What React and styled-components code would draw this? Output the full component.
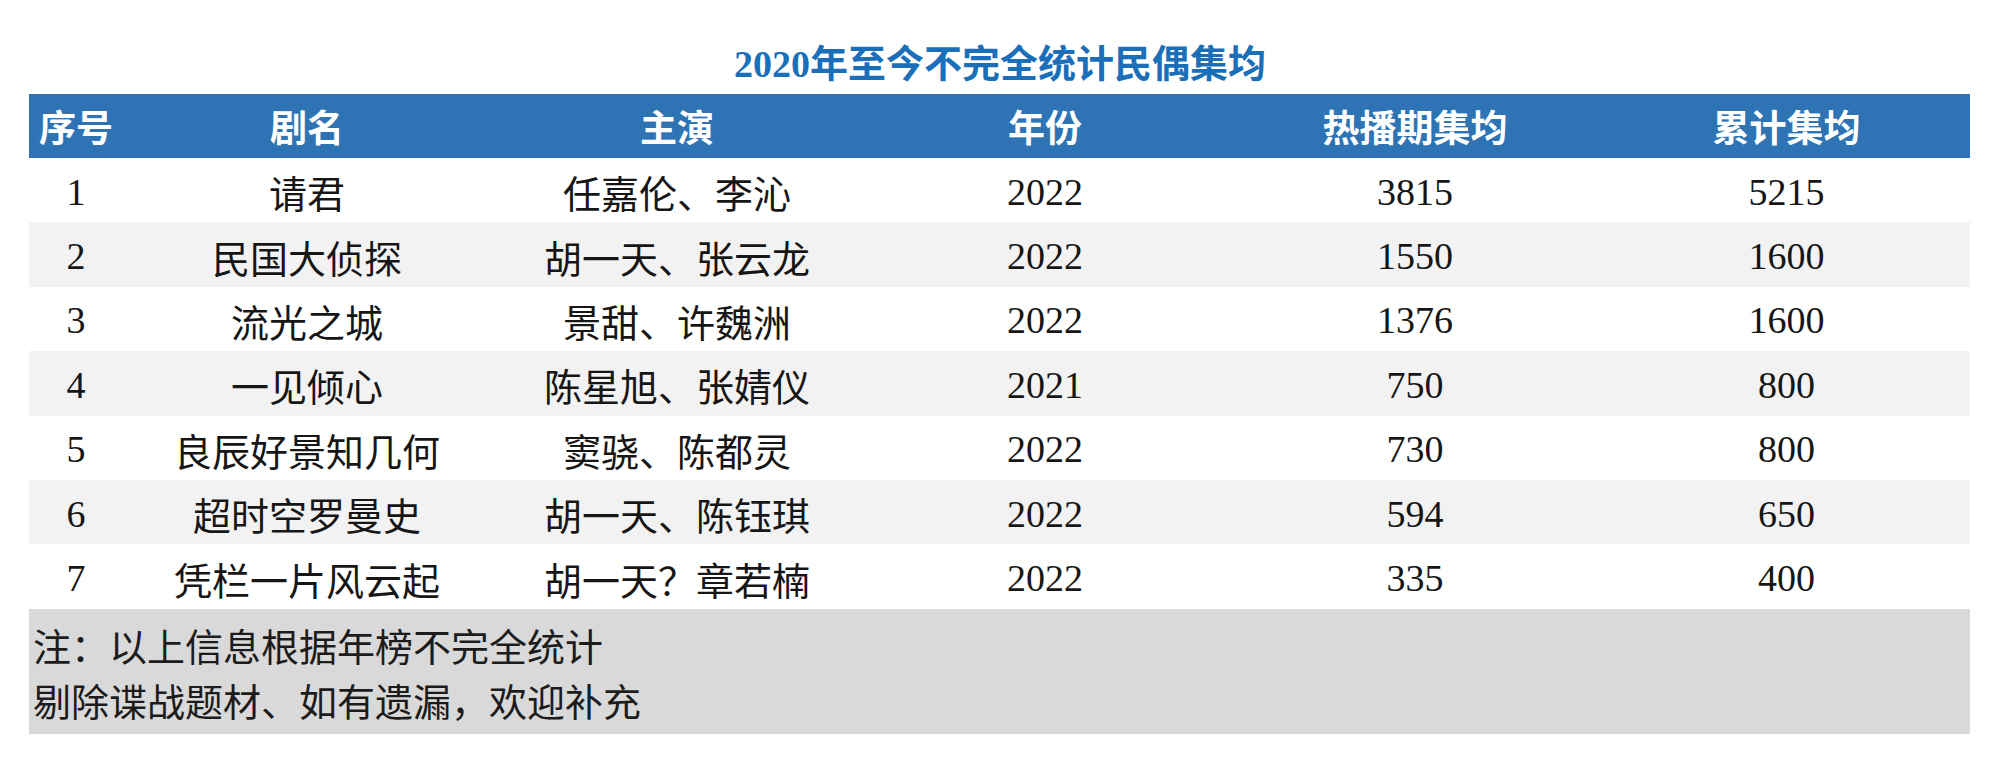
import styled, { createGlobalStyle } from "styled-components";

const GlobalStyle = createGlobalStyle`
    html, body {
        margin: 0;
        padding: 0;
        background: #ffffff;
    }
    body {
        font-family: "Noto Sans CJK SC", "Noto Sans", sans-serif;
    }
`

const Page = styled.div`
    width: 2000px;
    height: 765px;
    background: #ffffff;
    overflow: hidden;
`

const Title = styled.h1`
    margin: 0;
    height: 94px;
    padding-top: 45px;
    box-sizing: border-box;
    text-align: center;
    font-family: "Liberation Serif", "Noto Sans CJK SC", serif;
    font-size: 38px;
    line-height: 38px;
    font-weight: 700;
    color: #1b6fb9;
`

const Table = styled.div`
    margin-left: 29px;
    width: 1941px;
`

const Row = styled.div`
    display: grid;
    grid-template-columns: 94px 368px 372px 364px 376px 367px;
    height: ${props => props.header ? "64px" : "64.4px"};
    background: ${props => props.header ? "#2e74b5" : props.striped ? "#f2f2f2" : "#ffffff"};
`

const HeadCell = styled.div`
    display: flex;
    align-items: center;
    justify-content: center;
    font-family: "Noto Sans CJK SC", sans-serif;
    font-size: 37px;
    font-weight: 700;
    color: #ffffff;
    white-space: nowrap;
`

const Cell = styled.div`
    display: flex;
    align-items: center;
    justify-content: center;
    padding-top: 3px;
    font-family: "Liberation Serif", "Noto Sans CJK SC", serif;
    font-size: 38px;
    color: #161616;
    white-space: nowrap;
`

const Note = styled.div`
    margin-top: 0.2px;
    padding: 8px 0 7px 4px;
    background: #d9d9d9;
    font-family: "Noto Sans CJK SC", sans-serif;
    font-size: 38px;
    line-height: 55px;
    color: #1c1c1c;
`

const headers = ["序号", "剧名", "主演", "年份", "热播期集均", "累计集均"]

const dramas = [
    { no: 1, name: "请君", cast: "任嘉伦、李沁", year: 2022, hot: 3815, total: 5215 },
    { no: 2, name: "民国大侦探", cast: "胡一天、张云龙", year: 2022, hot: 1550, total: 1600 },
    { no: 3, name: "流光之城", cast: "景甜、许魏洲", year: 2022, hot: 1376, total: 1600 },
    { no: 4, name: "一见倾心", cast: "陈星旭、张婧仪", year: 2021, hot: 750, total: 800 },
    { no: 5, name: "良辰好景知几何", cast: "窦骁、陈都灵", year: 2022, hot: 730, total: 800 },
    { no: 6, name: "超时空罗曼史", cast: "胡一天、陈钰琪", year: 2022, hot: 594, total: 650 },
    { no: 7, name: "凭栏一片风云起", cast: "胡一天？章若楠", year: 2022, hot: 335, total: 400 },
]

export default function App(){
    return(
        <Page>
            <GlobalStyle/>
            <Title>2020年至今不完全统计民偶集均</Title>

            <Table>
                <Row header>
                    {headers.map(h => <HeadCell key={h}>{h}</HeadCell>)}
                </Row>

                {dramas.map((d, i) => (
                    <Row key={d.no} striped={i % 2 === 1}>
                        <Cell>{d.no}</Cell>
                        <Cell>{d.name}</Cell>
                        <Cell>{d.cast}</Cell>
                        <Cell>{d.year}</Cell>
                        <Cell>{d.hot}</Cell>
                        <Cell>{d.total}</Cell>
                    </Row>
                ))}

                <Note>
                    <div>注：以上信息根据年榜不完全统计</div>
                    <div>剔除谍战题材、如有遗漏，欢迎补充</div>
                </Note>
            </Table>
        </Page>
    )
}
